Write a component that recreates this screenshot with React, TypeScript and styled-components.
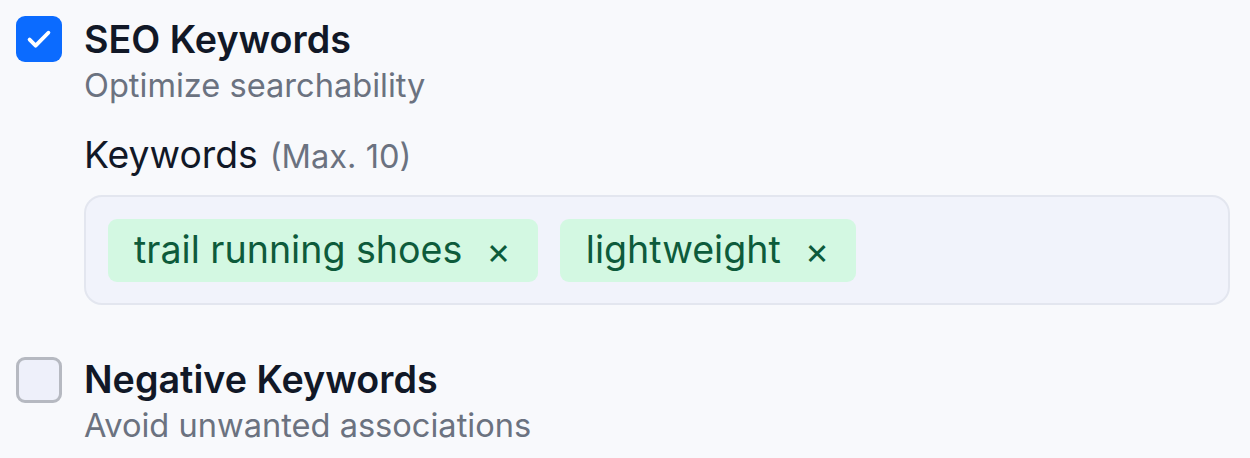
import React from "react";
import styled, { createGlobalStyle } from "styled-components";

const Global = createGlobalStyle`
  html, body { margin: 0; padding: 0; background: #f8f9fc; }
  body { font-family: Inter, "Noto Sans", sans-serif; -webkit-font-smoothing: antialiased; }
`;

const Page = styled.div`
  display: flex;
  flex-direction: column;
  gap: 51px;
  padding: 16px 20px 0 16px;
`;

const Option = styled.div`
  display: flex;
  align-items: flex-start;
  gap: 22px;
`;

const Box = styled.div<{ $checked?: boolean }>`
  flex: none;
  width: 46px;
  height: 46px;
  box-sizing: border-box;
  border-radius: 9px;
  display: flex;
  align-items: center;
  justify-content: center;
  background: ${(p) => (p.$checked ? "#0b6bff" : "#eef0fa")};
  border: ${(p) => (p.$checked ? "none" : "3px solid #b6b9c1")};
  margin-top: ${(p) => (p.$checked ? "0" : "1px")};
`;

const Body = styled.div`
  flex: 1;
  display: flex;
  flex-direction: column;
`;

const Title = styled.div`
  font-size: 37.7px;
  font-weight: 600;
  color: #111827;
  line-height: 46px;
`;

const Subtitle = styled.div`
  font-size: 32.6px;
  color: #6b7280;
  line-height: 46px;
`;

const Field = styled.div`
  display: flex;
  flex-direction: column;
  gap: 16px;
  margin-top: 24px;
`;

const Label = styled.div`
  font-size: 37.3px;
  font-weight: 400;
  color: #111827;
  line-height: 46px;
`;

const Hint = styled.span`
  font-size: 32.6px;
  font-weight: 400;
  color: #6b7280;
  margin-left: 12px;
`;

const InputBox = styled.div`
  box-sizing: border-box;
  height: 110px;
  border: 2px solid #e3e6ef;
  border-radius: 18px;
  background: #f1f3fb;
  padding: 0 22px;
  display: flex;
  align-items: center;
  gap: 22px;
`;

const Tag = styled.div`
  display: flex;
  align-items: center;
  gap: 24px;
  height: 63px;
  padding: 0 27px 0 26px;
  border-radius: 9px;
  background: #d3f8e2;
  color: #0d5b3b;
  font-size: 37.6px;
  font-weight: 400;
  line-height: 1;
`;

const Remove = styled.span`
  font-size: 37px;
  line-height: 1;
`;

const Check = () => (
  <svg width="30" height="30" viewBox="0 0 24 24" fill="none" stroke="#fff" strokeWidth="3.1" strokeLinecap="round" strokeLinejoin="round">
    <path d="M4.5 12.5l4.8 4.8L19.5 7" />
  </svg>
);

export default function App() {
  const tags = ["trail running shoes", "lightweight"];
  return (
    <>
      <Global />
      <Page>
        <Option>
          <Box $checked>
            <Check />
          </Box>
          <Body>
            <Title>SEO Keywords</Title>
            <Subtitle>Optimize searchability</Subtitle>
            <Field>
              <Label>
                Keywords<Hint>(Max. 10)</Hint>
              </Label>
              <InputBox>
                {tags.map((t) => (
                  <Tag key={t}>
                    {t}
                    <Remove>×</Remove>
                  </Tag>
                ))}
              </InputBox>
            </Field>
          </Body>
        </Option>
        <Option>
          <Box />
          <Body>
            <Title>Negative Keywords</Title>
            <Subtitle>Avoid unwanted associations</Subtitle>
          </Body>
        </Option>
      </Page>
    </>
  );
}
